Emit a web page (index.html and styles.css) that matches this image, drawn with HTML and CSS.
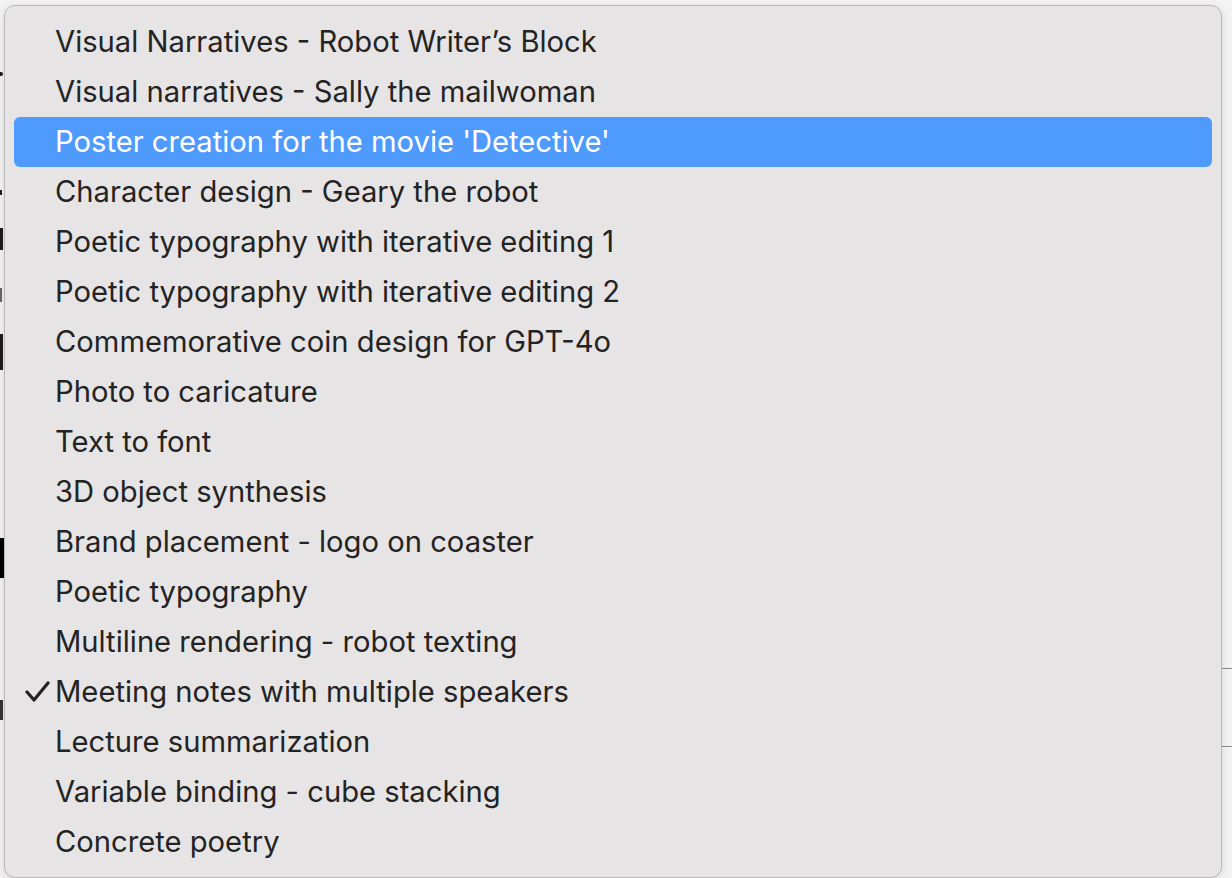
FILE: index.html
```html
<!DOCTYPE html>
<html lang="en">
<head>
  <meta charset="UTF-8" />
  <title>Examples</title>
  <link rel="stylesheet" href="styles.css">
</head>
<body>
  <div class="page">
    <div class="peek p1"></div>
    <div class="peek p2"></div>
    <div class="peek p3"></div>
    <div class="peek p4"></div>
    <div class="peek p5"></div>
    <div class="peek p6"></div>
    <div class="peek p7"></div>
    <div class="rule r1"></div>
    <div class="rule r2"></div>
  </div>

  <ul class="menu">
    <li>Visual Narratives - Robot Writer’s Block</li>
    <li>Visual narratives - Sally the mailwoman</li>
    <li class="active">Poster creation for the movie 'Detective'</li>
    <li>Character design - Geary the robot</li>
    <li>Poetic typography with iterative editing 1</li>
    <li>Poetic typography with iterative editing 2</li>
    <li>Commemorative coin design for GPT-4o</li>
    <li>Photo to caricature</li>
    <li>Text to font</li>
    <li>3D object synthesis</li>
    <li>Brand placement - logo on coaster</li>
    <li>Poetic typography</li>
    <li>Multiline rendering - robot texting</li>
    <li class="checked">
      <svg class="check" width="26" height="26" viewBox="0 0 26 26">
        <path d="M2 13 L9 21 L23 4" fill="none" stroke="#222" stroke-width="3.2" stroke-linecap="round" stroke-linejoin="round"/>
      </svg>
      Meeting notes with multiple speakers
    </li>
    <li>Lecture summarization</li>
    <li>Variable binding - cube stacking</li>
    <li>Concrete poetry</li>
  </ul>
</body>
</html>
```

FILE: styles.css
```css
body {
  margin: 0;
  background: #f3f3f3;
  font-family: Inter, "Noto Sans", sans-serif;
  overflow: hidden;
}

.page {
  position: relative;
  width: 1232px;
  height: 878px;
}

/* bits of the page behind the menu that peek out on the left */
.peek {
  position: absolute;
  left: 0;
  width: 4px;
  background: #1a1a1a;
}
.p1 { top: 72px; height: 4px; width: 3px; border-radius: 0 3px 3px 0; }
.p2 { top: 190px; height: 5px; width: 2px; }
.p3 { top: 228px; height: 22px; width: 3px; }
.p4 { top: 288px; height: 14px; width: 2px; background: #666; }
.p5 { top: 334px; height: 36px; width: 3px; }
.p6 { top: 538px; height: 40px; width: 4px; background: #000; }
.p7 { top: 700px; height: 20px; width: 3px; background: #333; }

.rule {
  position: absolute;
  right: 0;
  width: 12px;
  height: 1px;
  background: #8a8a8a;
}
.r1 { top: 668px; }
.r2 { top: 746px; }

.menu {
  position: absolute;
  top: 5px;
  left: 4px;
  width: 1218px;
  margin: 0;
  padding: 11px 9px 10px;
  box-sizing: border-box;
  list-style: none;
  background: #e6e4e4;
  border: 1px solid #b9b9b9;
  border-radius: 11px;
  box-shadow: 0 2px 8px rgba(0, 0, 0, 0.12);
}

.menu li {
  position: relative;
  height: 50px;
  line-height: 50px;
  padding-left: 41px;
  font-size: 29.2px;
  color: #232323;
  border-radius: 6px;
  white-space: nowrap;
}

.menu li.active {
  background: #4f9bfd;
  color: #fff;
}

.check {
  position: absolute;
  left: 11px;
  top: 12px;
}
```
